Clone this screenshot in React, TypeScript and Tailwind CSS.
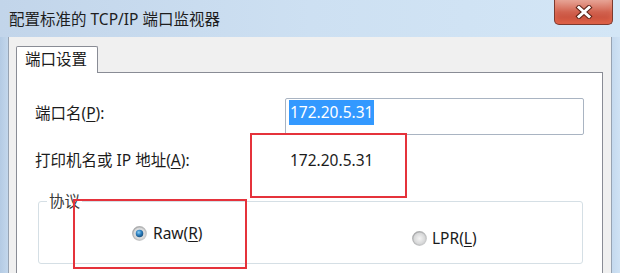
import React from "react";

const font = { fontFamily: '"Noto Sans", "Noto Sans CJK SC", sans-serif' };

function Radio({ checked }: { checked: boolean }) {
  return (
    <svg width="15" height="15" viewBox="0 0 14 14" className="shrink-0">
      <defs>
        <linearGradient id={checked ? "rg1" : "rg2"} x1="0" y1="0" x2="1" y2="1">
          <stop offset="0" stopColor="#a3a4a5" />
          <stop offset="1" stopColor="#d2d3d4" />
        </linearGradient>
        <radialGradient id={checked ? "rf1" : "rf2"} cx="0.5" cy="0.5" r="0.6">
          <stop offset="0" stopColor="#f4f4f4" />
          <stop offset="1" stopColor="#c9cacb" />
        </radialGradient>
        <radialGradient id="dot" cx="0.4" cy="0.35" r="0.7">
          <stop offset="0" stopColor="#8fd0f5" />
          <stop offset="0.5" stopColor="#2c7fbf" />
          <stop offset="1" stopColor="#154a78" />
        </radialGradient>
      </defs>
      <circle cx="7" cy="7" r="6.3" fill={`url(#${checked ? "rf1" : "rf2"})`} stroke={`url(#${checked ? "rg1" : "rg2"})`} strokeWidth="1.2" />
      {checked && <circle cx="7" cy="7" r="3.5" fill="url(#dot)" />}
    </svg>
  );
}

export default function App() {
  return (
    <div
      className="relative w-[620px] h-[273px] overflow-hidden flex flex-col bg-gradient-to-r from-[#c2d5ea] via-[#cde0f2] to-[#d3e6f6] text-[#1b1b1b]"
      style={font}
    >
      {/* Title bar */}
      <div className="h-[37px] shrink-0 flex items-start justify-between">
        <span className="pl-[9px] pt-[8px] text-[15.5px] leading-[22px] text-[#1e1e1e]">
          配置标准的 TCP/IP 端口监视器
        </span>
        <div className="mr-[7px] w-[59px] h-[25px] rounded-b-[5px] border border-t-0 border-[#7b3a2f] bg-gradient-to-b from-[#e6a597] via-[#d1624f] to-[#c2412d] flex items-center justify-center shadow-[inset_0_-4px_5px_rgba(240,120,90,0.6)]">
          <svg width="18" height="14" viewBox="0 0 18 14">
            <path d="M4 2.5 L14 11.5 M14 2.5 L4 11.5" stroke="#5e2418" strokeWidth="5" strokeLinecap="square" />
            <path d="M4 2.5 L14 11.5 M14 2.5 L4 11.5" stroke="#ffffff" strokeWidth="3" strokeLinecap="square" />
          </svg>
        </div>
      </div>

      {/* Body */}
      <div className="flex flex-1 min-h-0">
        <div className="w-[8px] shrink-0 bg-gradient-to-r from-[#b4cbe4] to-[#c3d7ec]" />
        <div className="flex-1 flex flex-col bg-[#f0f0f0] border-l border-r border-[#97a3b2] pt-[9px] pl-[7px] pr-[8px]">
          {/* Tab header */}
          <div className="flex">
            <div className="relative z-10 w-[82px] h-[27px] -mb-px bg-white border border-b-0 border-[#898c95] rounded-t-[2px] pl-[8px] text-[15.5px] leading-[25px]">
              端口设置
            </div>
          </div>
          {/* Tab page */}
          <div className="flex-1 bg-white border border-[#898c95] border-b-0 flex flex-col">
            <div className="grid grid-cols-[250px_299px] pl-[18px] mt-[25px] items-start">
              <div className="text-[15.5px] leading-[20px] pt-[5px]">
                端口名(<span className="underline underline-offset-2">P</span>):
              </div>
              <div className="h-[37px] border border-[#a9b4c2] rounded-[2px] pl-[3px] pt-px">
                <span className="inline-block bg-[#3399ff] text-white text-[15.5px] leading-[25px] px-px">
                  172.20.5.31
                </span>
              </div>
            </div>
            <div className="grid grid-cols-[250px_299px] pl-[18px] mt-[15px] text-[15.5px] leading-[20px]">
              <div>
                打印机名或 IP 地址(<span className="underline underline-offset-2">A</span>):
              </div>
              <div className="pl-[5px]">172.20.5.31</div>
            </div>
            <fieldset className="ml-[21px] mt-[21px] w-[545px] border border-[#d5dfe5] rounded-[3px]">
              <legend className="ml-[8px] px-[2px] text-[15.5px] leading-[20px] text-[#3a3a3a]">协议</legend>
              <div className="h-[52px] grid grid-cols-[280px_1fr] pl-[93px] items-start text-[15.5px] leading-[20px]">
                <div className="flex items-center gap-[6px] mt-[12px]">
                  <Radio checked />
                  <span>
                    Raw(<span className="underline underline-offset-2">R</span>)
                  </span>
                </div>
                <div className="flex items-center gap-[5px] mt-[17px]">
                  <Radio checked={false} />
                  <span>
                    LPR(<span className="underline underline-offset-2">L</span>)
                  </span>
                </div>
              </div>
            </fieldset>
          </div>
        </div>
        <div className="w-[8px] shrink-0 bg-gradient-to-r from-[#c4d9ee] to-[#cfe2f4]" />
      </div>

      {/* Annotation boxes */}
      <div className="absolute left-[250px] top-[133px] w-[157px] h-[65px] border-2 border-[#e5323b] pointer-events-none" />
      <div className="absolute left-[73px] top-[199px] w-[174px] h-[70px] border-2 border-[#e5323b] pointer-events-none" />
    </div>
  );
}
